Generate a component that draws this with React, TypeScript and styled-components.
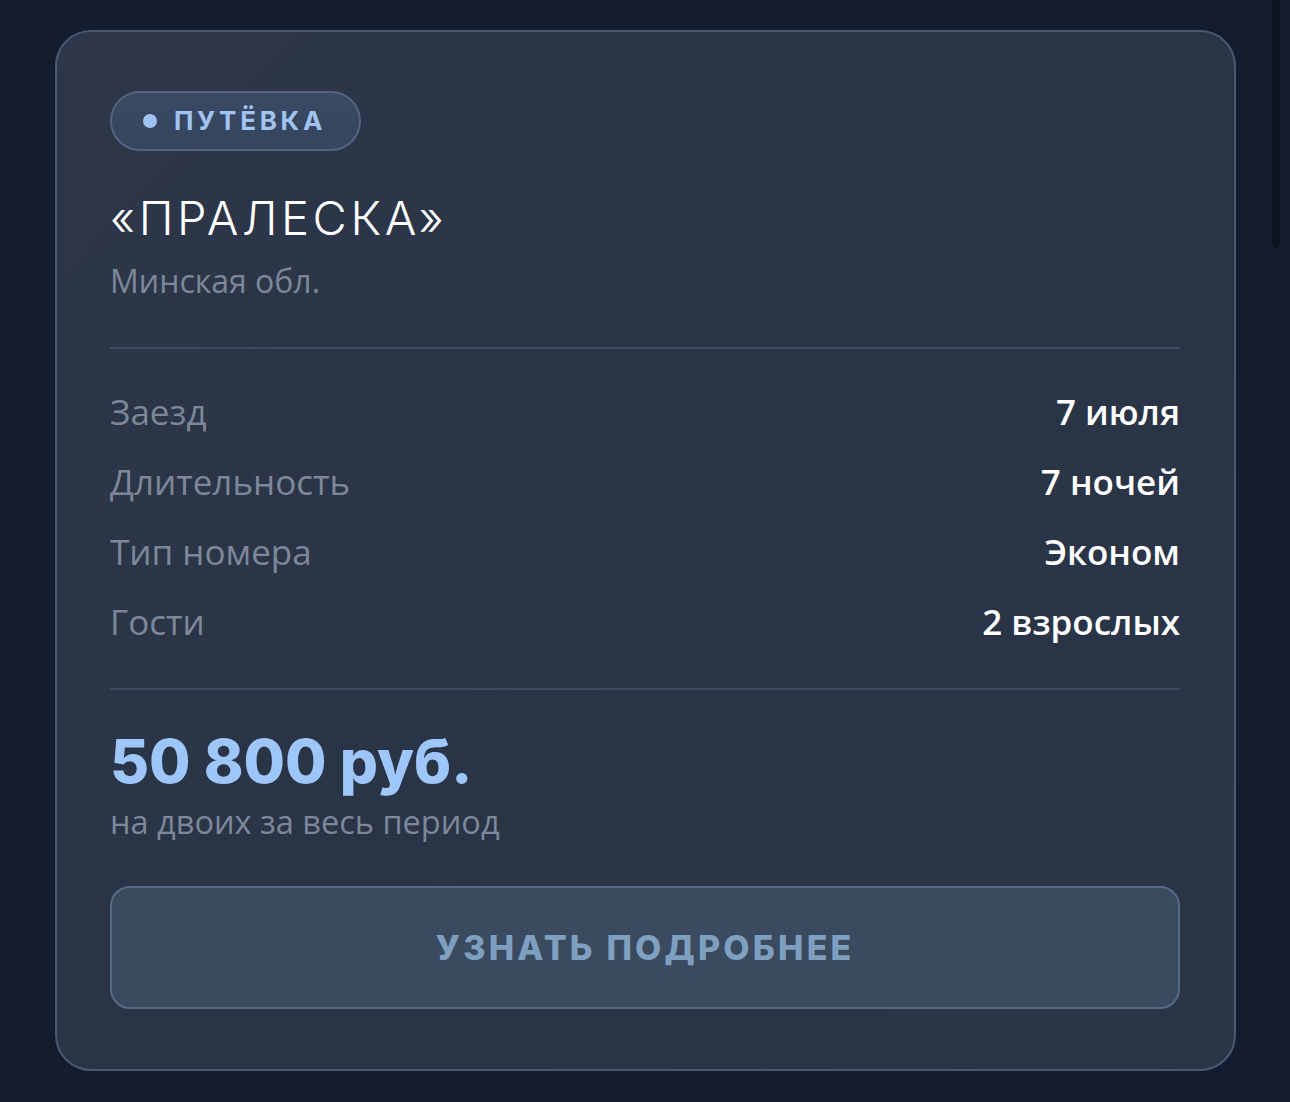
import React from "react";
import styled, { createGlobalStyle } from "styled-components";

const Global = createGlobalStyle`
  html, body { margin: 0; padding: 0; background: #141d2f; }
  body { font-family: "Open Sans", sans-serif; }
`;

const Page = styled.div`
  min-height: 1102px;
  padding: 30px 55px 32px 55px;
  box-sizing: border-box;
  background: #141d2f;
`;

const ScrollThumb = styled.div`
  position: fixed;
  top: 0;
  right: 10px;
  width: 8px;
  height: 248px;
  border-radius: 0 0 4px 4px;
  background: #0b1220;
`;

const Card = styled.div`
  width: 1181px;
  box-sizing: border-box;
  border: 2px solid #4a5870;
  border-radius: 36px;
  background: linear-gradient(135deg, #2d3749 0%, #2a3447 50%, #2b3548 100%);
  padding: 59px 54px 60px 53px;
  display: flex;
  flex-direction: column;
`;

const Badge = styled.div`
  align-self: flex-start;
  display: flex;
  align-items: center;
  gap: 17px;
  height: 60px;
  box-sizing: border-box;
  padding: 0 33px 0 31px;
  border: 2px solid #536380;
  border-radius: 30px;
  background: linear-gradient(180deg, #3a4963 0%, #36455e 100%);
`;

const Dot = styled.span`
  width: 14px;
  height: 14px;
  border-radius: 50%;
  background: #9fc4f3;
`;

const BadgeText = styled.span`
  font-family: Inter, sans-serif;
  font-weight: 700;
  font-size: 26px;
  letter-spacing: 3.7px;
  color: #a0c3ef;
  line-height: 1;
`;

const Title = styled.h1`
  margin: 38px 0 0 0;
  font-family: Inter, sans-serif;
  font-weight: 300;
  font-size: 47px;
  letter-spacing: 3.6px;
  line-height: 58px;
  color: #ffffff;
`;

const Subtitle = styled.div`
  margin-top: 13px;
  font-size: 32px;
  line-height: 42px;
  color: #7d8799;
`;

const Divider = styled.div<{ $top: number }>`
  height: 2px;
  background: #3e4b60;
  margin-top: ${(p) => p.$top}px;
`;

const Rows = styled.div`
  display: flex;
  flex-direction: column;
  margin-top: 27px;
`;

const Row = styled.div`
  display: flex;
  justify-content: space-between;
  align-items: center;
  height: 70px;
`;

const Label = styled.span`
  font-size: 35px;
  color: #7d8799;
`;

const Value = styled.span`
  font-size: 35px;
  font-weight: 600;
  color: #ffffff;
`;

const Price = styled.div`
  margin-top: 34px;
  font-family: Inter, sans-serif;
  font-weight: 800;
  font-size: 60px;
  line-height: 74px;
  color: #9fc6f8;
`;

const PriceNote = styled.div`
  margin-top: 3px;
  font-size: 32.5px;
  line-height: 42px;
  color: #7d8799;
`;

const Button = styled.button`
  margin-top: 43px;
  height: 123px;
  width: 100%;
  box-sizing: border-box;
  border: 2px solid #566a87;
  border-radius: 20px;
  background: #3a4a5f;
  font-family: Inter, sans-serif;
  font-weight: 800;
  font-size: 34px;
  letter-spacing: 3.2px;
  color: #7e9fbf;
  cursor: pointer;
`;

const rows = [
  ["Заезд", "7 июля"],
  ["Длительность", "7 ночей"],
  ["Тип номера", "Эконом"],
  ["Гости", "2 взрослых"],
];

export default function App() {
  return (
    <Page>
      <Global />
      <ScrollThumb />
      <Card>
        <Badge>
          <Dot />
          <BadgeText>ПУТЁВКА</BadgeText>
        </Badge>
        <Title>«ПРАЛЕСКА»</Title>
        <Subtitle>Минская обл.</Subtitle>
        <Divider $top={45} />
        <Rows>
          {rows.map(([l, v]) => (
            <Row key={l}>
              <Label>{l}</Label>
              <Value>{v}</Value>
            </Row>
          ))}
        </Rows>
        <Divider $top={32} />
        <Price>50 800 руб.</Price>
        <PriceNote>на двоих за весь период</PriceNote>
        <Button>УЗНАТЬ ПОДРОБНЕЕ</Button>
      </Card>
    </Page>
  );
}
